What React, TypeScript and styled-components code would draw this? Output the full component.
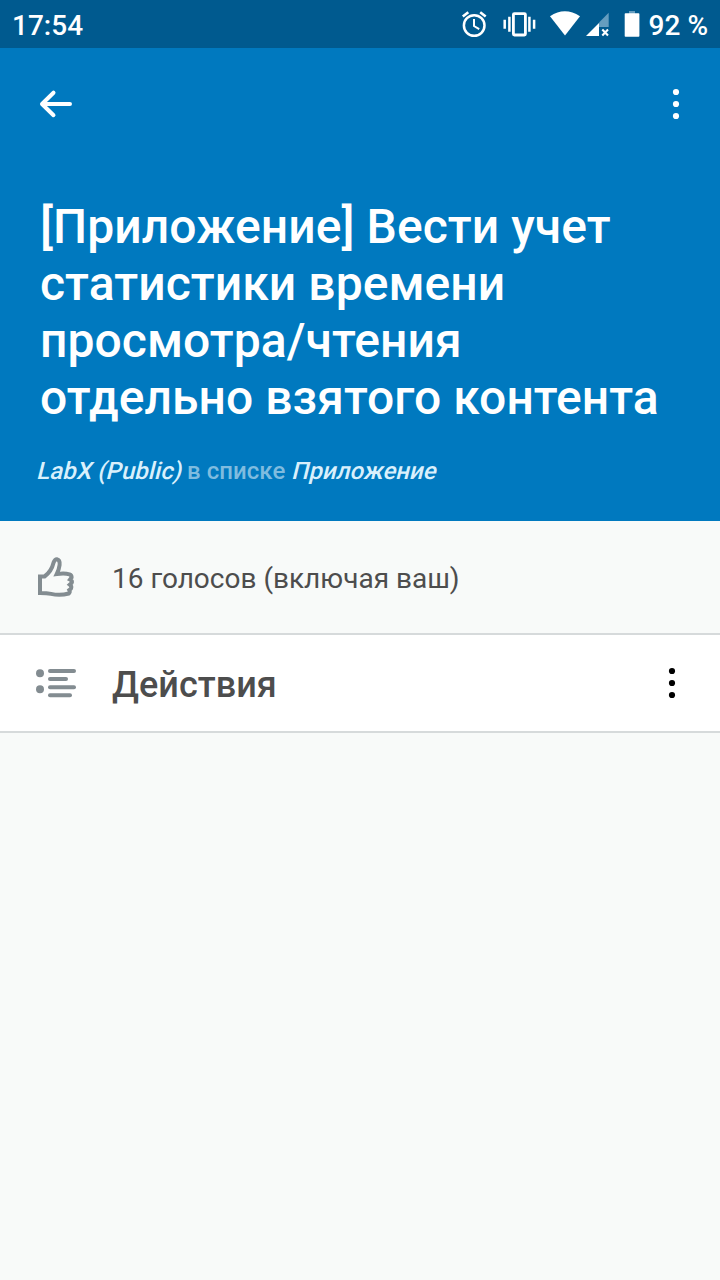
import React from "react";
import styled, { createGlobalStyle } from "styled-components";

const GlobalStyle = createGlobalStyle`
  *, *::before, *::after { box-sizing: border-box; }
  body {
    margin: 0;
    background: #f8faf9;
    font-family: Roboto, "Noto Sans", sans-serif;
  }
  svg { display: block; flex: none; }
`;

const Screen = styled.div`
  display: flex;
  flex-direction: column;
  width: 100%;
  min-height: 100vh;
  background: #f8faf9;
`;

const StatusBar = styled.header`
  display: flex;
  align-items: center;
  justify-content: space-between;
  height: 48px;
  padding: 4px 12px 0;
  background: #005a8f;
  color: #fff;
`;

const StatusText = styled.span`
  font-size: 28px;
  line-height: 32px;
  font-weight: 500;
  white-space: pre;
`;

const StatusGroup = styled.div`
  display: flex;
  align-items: center;
  gap: 5px;
`;

const CardHeader = styled.section`
  height: 473px;
  padding: 32px 32px 0 36px;
  background: #0079bf;
  color: #fff;
`;

const Toolbar = styled.nav`
  display: flex;
  align-items: center;
  justify-content: space-between;
  height: 48px;
`;

const IconButton = styled.button<{ $width?: number }>`
  display: flex;
  align-items: center;
  justify-content: center;
  width: ${({ $width }) => $width ?? 40}px;
  height: 48px;
  padding: 0;
  border: 0;
  background: none;
  color: inherit;
`;

const Title = styled.h1`
  margin: 70px 20px 0 4px;
  font-size: 48px;
  line-height: 57px;
  font-weight: 500;
  letter-spacing: 0.07px;
`;

const Location = styled.p`
  margin: 31px 0 0;
  font-size: 24px;
  line-height: 28px;
  font-weight: 500;
  letter-spacing: 0.06px;
  color: #7fbcdf;
  white-space: nowrap;
`;

const Slanted = styled.span`
  display: inline-block;
  transform: skewX(-14deg);
  transform-origin: 0 80%;
  color: #d9f0fc;
`;

const Row = styled.section<{ $height: number; $white?: boolean }>`
  display: flex;
  align-items: center;
  height: ${({ $height }) => $height}px;
  padding: 0 36px;
  border-bottom: 2px solid #d6dadb;
  background: ${({ $white }) => ($white ? "#fff" : "#f8faf9")};
  color: #4d4d4d;
`;

const RowIcon = styled.span<{ $drop?: number }>`
  width: 76px;
  padding-top: ${({ $drop }) => $drop ?? 0}px;
  color: #838c91;
`;

const Votes = styled.span`
  padding-top: 4px;
  font-size: 28px;
  line-height: 34px;
`;

const RowTitle = styled.h2`
  flex: 1;
  margin: 0;
  padding-top: 4px;
  font-size: 36px;
  line-height: 42px;
  font-weight: 500;
  letter-spacing: 0.05px;
`;

const MoreButton = styled(IconButton)`
  color: #000;
`;

const Dots = () => (
  <svg width="8" height="32" viewBox="0 0 8 32" fill="currentColor">
    <circle cx="4" cy="4" r="3.1" />
    <circle cx="4" cy="16" r="3.1" />
    <circle cx="4" cy="28" r="3.1" />
  </svg>
);

const BackArrow = () => (
  <svg width="40" height="48" viewBox="0 0 40 48" fill="none" stroke="currentColor" strokeWidth="4" strokeLinecap="round" strokeLinejoin="round">
    <path d="M34 24H7M17.5 12.7L6 24l11.5 11.2" />
  </svg>
);

const StatusIcons = () => (
  <svg width="184" height="44" viewBox="0 4 184 44" fill="none" stroke="#fff">
    <circle cx="14.2" cy="25.5" r="10.3" strokeWidth="2.5" />
    <path d="M14 19v7l5.2 3.2" strokeWidth="2" />
    <path d="M2.8 16.6l5.5-4.3M20.2 12.3l5.5 4.3" strokeWidth="2.6" />
    <rect x="53.4" y="13.6" width="12" height="21.4" rx="1" strokeWidth="2.8" />
    <path d="M49.4 16.8v15M69.4 16.8v15" strokeWidth="2.5" />
    <path d="M44.7 19.8v9M74.1 19.8v9" strokeWidth="2.5" />
    <path d="M90 16.2Q104.8 6.5 120 16.2L105 35.5Z" fill="#fff" stroke="none" />
    <path d="M148.7 12.7V27H139v-4.5z" fill="#659dbf" stroke="none" />
    <path d="M126 36l13-13v13z" fill="#fff" stroke="none" />
    <path d="M142.3 29.6l5.7 5.9M148 29.6l-5.7 5.9" strokeWidth="2.1" />
    <path d="M169 11h6v3h-6z" fill="#659dbf" stroke="none" />
    <rect x="164.7" y="13.3" width="14.7" height="23.4" rx="0.8" fill="#fff" stroke="none" />
  </svg>
);

const ThumbUp = () => (
  <svg width="40" height="44" viewBox="0 0 40 44" fill="none" stroke="currentColor" strokeWidth="4" strokeLinecap="round">
    <path d="M4 20.5H8.5Q15.5 15.5 17.6 6.5Q18.7 3.2 20.8 3.2Q24.2 4 23.6 9Q23 13.5 20.8 18Q28.5 16.8 33.5 18.3Q35.8 19.2 35.6 21.5L34 23.6Q36.7 25.1 35.6 27.1L33.8 28.7Q36.1 30.5 34.9 32.7L33.3 34Q34.4 36 32.8 37.5Q24 40 15 37.9Q11 37 4 37Z" strokeLinejoin="miter" />
  </svg>
);

const ActivityIcon = () => (
  <svg width="40" height="30" viewBox="0 0 40 30" fill="currentColor">
    <circle cx="4" cy="5.2" r="4" />
    <circle cx="4" cy="21.2" r="4" />
    <rect x="12" y="1" width="28" height="4" rx="2" />
    <rect x="12" y="9" width="20" height="4" rx="2" />
    <rect x="12" y="17.2" width="28" height="4" rx="2" />
    <rect x="12" y="25.2" width="24" height="4" rx="2" />
  </svg>
);

export default function App() {
  return (
    <Screen>
      <GlobalStyle />
      <StatusBar>
        <StatusText>17:54</StatusText>
        <StatusGroup>
          <StatusIcons />
          <StatusText>92 %</StatusText>
        </StatusGroup>
      </StatusBar>
      <CardHeader>
        <Toolbar>
          <IconButton aria-label="Назад"><BackArrow /></IconButton>
          <IconButton $width={24} aria-label="Меню"><Dots /></IconButton>
        </Toolbar>
        <Title>[Приложение] Вести учет статистики времени просмотра/чтения отдельно взятого контента</Title>
        <Location>
          <Slanted>LabX (Public)</Slanted> в списке <Slanted>Приложение</Slanted>
        </Location>
      </CardHeader>
      <Row $height={114}>
        <RowIcon $drop={2}><ThumbUp /></RowIcon>
        <Votes>16 голосов (включая ваш)</Votes>
      </Row>
      <Row $height={98} $white>
        <RowIcon><ActivityIcon /></RowIcon>
        <RowTitle>Действия</RowTitle>
        <MoreButton $width={24} aria-label="Меню действий"><Dots /></MoreButton>
      </Row>
    </Screen>
  );
}
